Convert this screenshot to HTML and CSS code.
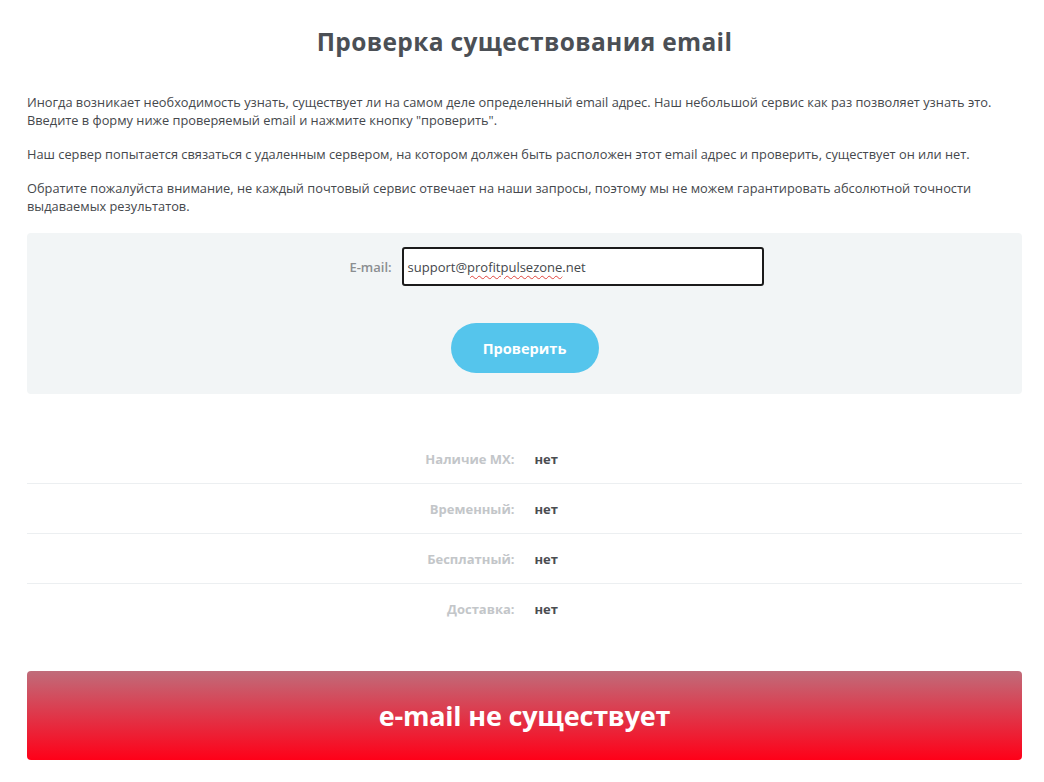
FILE: index.html
```html
<!DOCTYPE html>
<html lang="ru">
<head>
<meta charset="utf-8">
<title>Проверка существования email</title>
<link rel="stylesheet" href="styles.css">
</head>
<body>
<div class="page">
  <h1 class="title">Проверка существования email</h1>
  <div class="intro">
    <p>Иногда возникает необходимость узнать, существует ли на самом деле определенный email адрес. Наш небольшой сервис как раз позволяет узнать это.<br>Введите в форму ниже проверяемый email и нажмите кнопку "проверить".</p>
    <p>Наш сервер попытается связаться с удаленным сервером, на котором должен быть расположен этот email адрес и проверить, существует он или нет.</p>
    <p>Обратите пожалуйста внимание, не каждый почтовый сервис отвечает на наши запросы, поэтому мы не можем гарантировать абсолютной точности выдаваемых результатов.</p>
  </div>
  <form class="check-form">
    <div class="field">
      <label class="field-label" for="email">E-mail:</label>
      <div class="input"><span class="input-text">support@<span class="misspelled">profitpulsezone</span>.net</span></div>
    </div>
    <button type="button" class="btn">Проверить</button>
  </form>
  <div class="results">
    <div class="row"><div class="r-label">Наличие MX:</div><div class="r-value">нет</div></div>
    <div class="row"><div class="r-label">Временный:</div><div class="r-value">нет</div></div>
    <div class="row"><div class="r-label">Бесплатный:</div><div class="r-value">нет</div></div>
    <div class="row last"><div class="r-label">Доставка:</div><div class="r-value">нет</div></div>
  </div>
  <div class="verdict">e-mail не существует</div>
</div>
</body>
</html>
```
FILE: styles.css
```css
* { box-sizing: border-box; }
html, body { margin: 0; padding: 0; background: #fff; }
body { font-family: "Open Sans", "Liberation Sans", sans-serif; color: #44474b; }
.page { width: 995px; margin: 0 0 0 27px; padding-top: 26px; }
.title {
  margin: 0;
  text-align: center;
  font-family: "Open Sans", sans-serif;
  font-weight: 700;
  font-size: 24.5px;
  line-height: 32px;
  color: #4b4f55;
  letter-spacing: 0.35px;
}
.intro { margin-top: 35px; font-size: 12.8px; line-height: 18px; color: #45484c; }
.intro p { margin: 0 0 16px 0; }
.intro p:last-child { margin-bottom: 0; }
.check-form {
  margin-top: 18px;
  background: #f2f5f6;
  border-radius: 4px;
  height: 161px;
  padding-top: 14px;
  display: flex;
  flex-direction: column;
  align-items: center;
}
.field { display: flex; align-items: center; margin-left: 64px; }
.field-label {
  font-size: 13px;
  font-weight: 600;
  color: #8b8e91;
  margin-right: 10px;
}
.input {
  width: 362px;
  height: 39px;
  background: #fff;
  border: 2px solid #1b1b1b;
  border-radius: 3px;
  padding: 0 4px;
  display: flex;
  align-items: center;
  font-size: 13px;
  color: #44474b;
}
.misspelled { text-decoration: underline wavy #e0453e; text-decoration-thickness: 1px; text-underline-offset: 3px; }
.btn {
  margin-top: 37px;
  width: 148px;
  height: 50px;
  border: 0;
  border-radius: 25px;
  background: #55c5ec;
  color: #fff;
  font-family: "Open Sans", sans-serif;
  font-weight: 700;
  font-size: 14.6px;
  cursor: pointer;
}
.results { margin-top: 40px; }
.row {
  display: grid;
  grid-template-columns: 1fr 1fr;
  height: 50px;
  align-items: center;
  border-bottom: 1px solid #eceff1;
}
.row.last { border-bottom: 0; }
.r-label {
  text-align: right;
  padding-right: 10px;
  font-size: 13px;
  font-weight: 700;
  color: #c3c6c9;
}
.r-value {
  padding-left: 10px;
  font-size: 13px;
  font-weight: 700;
  color: #4a4d51;
}
.verdict {
  margin-top: 37px;
  height: 89px;
  border-radius: 4px;
  background: linear-gradient(to bottom, #c06c7a 0%, #ff0018 100%);
  color: #fff;
  display: flex;
  align-items: center;
  justify-content: center;
  font-family: "Open Sans", sans-serif;
  font-weight: 700;
  font-size: 27px;
  letter-spacing: -0.2px;
}
```
